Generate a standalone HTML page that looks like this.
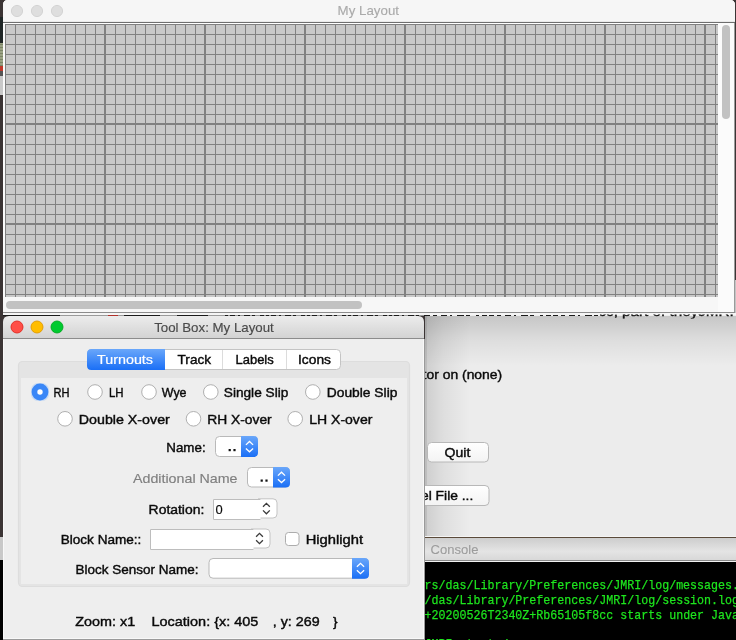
<!DOCTYPE html><html><head><meta charset="utf-8"><style>html,body{margin:0;padding:0;background:#3b3434;overflow:hidden;width:736px;height:640px}svg{display:block;will-change:transform}</style></head><body><svg width="736" height="640" viewBox="0 0 736 640" shape-rendering="auto">
<defs>
<linearGradient id="tbx" x1="0" y1="0" x2="0" y2="1"><stop offset="0" stop-color="#ececec"/><stop offset="1" stop-color="#d3d3d3"/></linearGradient>
<linearGradient id="blue" x1="0" y1="0" x2="0" y2="1"><stop offset="0" stop-color="#6aa7fa"/><stop offset="1" stop-color="#1a6ff6"/></linearGradient>
<linearGradient id="con" x1="0" y1="0" x2="0" y2="1"><stop offset="0" stop-color="#cdcdcd"/><stop offset="0.6" stop-color="#e4e4e4"/><stop offset="1" stop-color="#d8d8d8"/></linearGradient>
<linearGradient id="shTop" x1="0" y1="0" x2="0" y2="1"><stop offset="0" stop-color="#000" stop-opacity="0.16"/><stop offset="0.5" stop-color="#000" stop-opacity="0.06"/><stop offset="1" stop-color="#000" stop-opacity="0"/></linearGradient>
<linearGradient id="shLeft" x1="0" y1="0" x2="1" y2="0"><stop offset="0" stop-color="#000" stop-opacity="0.13"/><stop offset="0.4" stop-color="#000" stop-opacity="0.06"/><stop offset="1" stop-color="#000" stop-opacity="0"/></linearGradient>
<linearGradient id="btn" x1="0" y1="0" x2="0" y2="1"><stop offset="0" stop-color="#ffffff"/><stop offset="1" stop-color="#f3f3f3"/></linearGradient>
<clipPath id="clipMain"><rect x="425" y="313" width="311" height="224"/></clipPath>
<clipPath id="clipCon"><rect x="425" y="562" width="311" height="78"/></clipPath>
<clipPath id="clipStrip"><rect x="0" y="313" width="736" height="3"/></clipPath>
</defs>
<rect x="0" y="0" width="736" height="640" fill="#3b3434" />
<rect x="0" y="17" width="3" height="26" fill="#1f2626" />
<rect x="0" y="43" width="3" height="23" fill="#9aa283" />
<rect x="0" y="44" width="3" height="1" fill="#7b8466" />
<rect x="0" y="47" width="3" height="1" fill="#7b8466" />
<rect x="0" y="50" width="3" height="1" fill="#7b8466" />
<rect x="0" y="53" width="3" height="1" fill="#7b8466" />
<rect x="0" y="56" width="3" height="1" fill="#7b8466" />
<rect x="0" y="59" width="3" height="1" fill="#7b8466" />
<rect x="0" y="62" width="3" height="1" fill="#7b8466" />
<rect x="0" y="65" width="3" height="1" fill="#7b8466" />
<rect x="0" y="66" width="3" height="5" fill="#c0392b" />
<rect x="0" y="71" width="3" height="5" fill="#555555" />
<rect x="0" y="76" width="3" height="19" fill="#c8c8c8" />
<rect x="0" y="537" width="3" height="23" fill="#c8c8c8" />
<rect x="0" y="560" width="3" height="80" fill="#000000" />
<rect x="425" y="313" width="311" height="224" fill="#ececec" />
<g clip-path="url(#clipMain)">
<rect x="425" y="316" width="311" height="50" fill="url(#shTop)" />
<rect x="425" y="316" width="45" height="221" fill="url(#shLeft)" />
<rect x="425" y="316" width="2" height="221" fill="#000" opacity="0.08"/>
</g>
<rect x="3" y="313" width="733" height="2" fill="#f5f5f5" />
<rect x="3" y="315" width="422" height="1" fill="#9a9a9a" />
<rect x="3" y="315" width="57" height="1" fill="#1a1a1a" />
<rect x="108" y="315" width="10" height="1" fill="#b0302a" />
<rect x="124" y="315" width="36" height="1" fill="#1a1a1a" />
<rect x="177" y="315" width="31" height="1" fill="#1a1a1a" />
<line x1="225" y1="315.5" x2="425" y2="315.5" stroke="#1a1a1a" stroke-width="1" stroke-dasharray="3 2 5 3 2 4 6 2 3 5 4 2"/>
<line x1="425" y1="315.5" x2="600" y2="315.5" stroke="#1a1a1a" stroke-width="1" stroke-dasharray="5 3 4 4 6 3 2 5 7 2 4 6 3 3 5 2"/>
<clipPath id="clipStrip2"><rect x="600" y="314.6" width="136" height="4"/></clipPath>
<g clip-path="url(#clipStrip2)">
<text x="535" y="316.2" font-size="13" fill="#111" font-family='"Liberation Sans", sans-serif' textLength="248.6" lengthAdjust="spacingAndGlyphs" stroke="#111" stroke-width="0.4" >b65105f8cc, part of theyJMRI project</text>
</g>
<rect x="425" y="537" width="311" height="1" fill="#5a4a3a" />
<rect x="425" y="536" width="311" height="1" fill="#f4f4f4" />
<rect x="425" y="538" width="311" height="22" fill="url(#con)" />
<rect x="425" y="560" width="311" height="1" fill="#8a8a8a" />
<rect x="425" y="561" width="311" height="1" fill="#f0f0f0" />
<rect x="425" y="562" width="311" height="78" fill="#000000" />
<text x="430.6" y="553.9" font-size="13" fill="#9c9c9c" font-family='"Liberation Sans", sans-serif' textLength="47.8" lengthAdjust="spacingAndGlyphs" stroke="#9c9c9c" stroke-width="0.1" >Console</text>
<g clip-path="url(#clipMain)">
<text x="422.6" y="379" font-size="13" fill="#0a0a0a" font-family='"Liberation Sans", sans-serif' textLength="79.6" lengthAdjust="spacingAndGlyphs" stroke="#0a0a0a" stroke-width="0.4" >tor on (none)</text>
</g>
<path d="M3,313 L3,5 Q3,0 8,0 L730,0 Q735,0 735,5 L735,313 Z" fill="#fafafa"/>
<path d="M3,22 L3,5 Q3,0 8,0 L730,0 Q735,0 735,5 L735,22 Z" fill="#f6f6f6"/>
<rect x="3" y="21" width="732" height="1" fill="#e9e9e9" />
<rect x="3" y="22" width="732" height="1" fill="#6e6e6e" />
<rect x="3" y="23" width="732" height="1" fill="#ffffff" />
<rect x="734" y="23" width="1" height="290" fill="#9a9a9a" />
<rect x="735" y="280" width="1" height="33" fill="#c4c4c4" />
<rect x="3" y="312" width="732" height="1" fill="#8c8c8c" />
<circle cx="17" cy="11" r="5.6" fill="#dedede" stroke="#cdcdcd" stroke-width="0.8"/>
<circle cx="37" cy="11" r="5.6" fill="#dedede" stroke="#cdcdcd" stroke-width="0.8"/>
<circle cx="57" cy="11" r="5.6" fill="#dedede" stroke="#cdcdcd" stroke-width="0.8"/>
<text x="337.6" y="15.2" font-size="13" fill="#aaaaaa" font-family='"Liberation Sans", sans-serif' textLength="61.4" lengthAdjust="spacingAndGlyphs" stroke="#aaaaaa" stroke-width="0.12" >My Layout</text>
<rect x="5" y="24" width="713" height="273" fill="#c8c8c8" />
<path d="M5,24h1v273h-1zM15,24h1v273h-1zM25,24h1v273h-1zM35,24h1v273h-1zM45,24h1v273h-1zM55,24h1v273h-1zM65,24h1v273h-1zM75,24h1v273h-1zM85,24h1v273h-1zM95,24h1v273h-1zM105,24h1v273h-1zM115,24h1v273h-1zM125,24h1v273h-1zM135,24h1v273h-1zM145,24h1v273h-1zM155,24h1v273h-1zM165,24h1v273h-1zM175,24h1v273h-1zM185,24h1v273h-1zM195,24h1v273h-1zM205,24h1v273h-1zM215,24h1v273h-1zM225,24h1v273h-1zM235,24h1v273h-1zM245,24h1v273h-1zM255,24h1v273h-1zM265,24h1v273h-1zM275,24h1v273h-1zM285,24h1v273h-1zM295,24h1v273h-1zM305,24h1v273h-1zM315,24h1v273h-1zM325,24h1v273h-1zM335,24h1v273h-1zM345,24h1v273h-1zM355,24h1v273h-1zM365,24h1v273h-1zM375,24h1v273h-1zM385,24h1v273h-1zM395,24h1v273h-1zM405,24h1v273h-1zM415,24h1v273h-1zM425,24h1v273h-1zM435,24h1v273h-1zM445,24h1v273h-1zM455,24h1v273h-1zM465,24h1v273h-1zM475,24h1v273h-1zM485,24h1v273h-1zM495,24h1v273h-1zM505,24h1v273h-1zM515,24h1v273h-1zM525,24h1v273h-1zM535,24h1v273h-1zM545,24h1v273h-1zM555,24h1v273h-1zM565,24h1v273h-1zM575,24h1v273h-1zM585,24h1v273h-1zM595,24h1v273h-1zM605,24h1v273h-1zM615,24h1v273h-1zM625,24h1v273h-1zM635,24h1v273h-1zM645,24h1v273h-1zM655,24h1v273h-1zM665,24h1v273h-1zM675,24h1v273h-1zM685,24h1v273h-1zM695,24h1v273h-1zM705,24h1v273h-1zM715,24h1v273h-1zM104,24h1v273h-1zM204,24h1v273h-1zM304,24h1v273h-1zM404,24h1v273h-1zM504,24h1v273h-1zM604,24h1v273h-1zM704,24h1v273h-1zM5,24h713v1h-713zM5,34h713v1h-713zM5,44h713v1h-713zM5,54h713v1h-713zM5,64h713v1h-713zM5,74h713v1h-713zM5,84h713v1h-713zM5,94h713v1h-713zM5,104h713v1h-713zM5,114h713v1h-713zM5,124h713v1h-713zM5,134h713v1h-713zM5,144h713v1h-713zM5,154h713v1h-713zM5,164h713v1h-713zM5,174h713v1h-713zM5,184h713v1h-713zM5,194h713v1h-713zM5,204h713v1h-713zM5,214h713v1h-713zM5,224h713v1h-713zM5,234h713v1h-713zM5,244h713v1h-713zM5,254h713v1h-713zM5,264h713v1h-713zM5,274h713v1h-713zM5,284h713v1h-713zM5,294h713v1h-713zM5,123h713v1h-713zM5,223h713v1h-713z" fill="#808080" shape-rendering="crispEdges"/>
<rect x="718" y="23" width="16" height="289" fill="#fbfbfb" />
<rect x="3" y="297" width="715" height="15" fill="#f7f7f7" />
<rect x="722" y="25" width="8" height="94" rx="4" fill="#c2c2c2"/>
<rect x="6" y="301" width="356" height="8" rx="4" fill="#c2c2c2"/>
<rect x="3" y="339" width="422" height="301" fill="#9a9a9a" />
<rect x="3" y="339" width="421" height="300" fill="#f8f8f8" />
<rect x="4" y="339" width="419" height="299" fill="#eeeeee" />
<path d="M3,338 L3,322 Q3,316 9,316 L418,316 Q424,316 424,322 L424,338 Z" fill="url(#tbx)"/>
<rect x="3" y="338" width="421" height="1" fill="#8c8c8c" />
<circle cx="17" cy="327" r="6" fill="#ff4f47" stroke="#e0281f" stroke-width="0.9"/>
<circle cx="37" cy="327" r="6" fill="#ffbd00" stroke="#e09800" stroke-width="0.9"/>
<circle cx="57" cy="327" r="6" fill="#00ca30" stroke="#00a81e" stroke-width="0.9"/>
<text x="154.2" y="331.9" font-size="13" fill="#4a4a4a" font-family='"Liberation Sans", sans-serif' textLength="119.6" lengthAdjust="spacingAndGlyphs" stroke="#4a4a4a" stroke-width="0.15" >Tool Box: My Layout</text>
<rect x="18.5" y="361.5" width="391" height="225" rx="4" fill="#e4e4e4" stroke="#dddddd" stroke-width="1.2"/>
<rect x="21" y="378" width="386" height="206" fill="#eeeeee" />
<rect x="87.5" y="349.5" width="253" height="20" rx="4" fill="#ffffff" stroke="#c4c4c4" stroke-width="1"/>
<path d="M91.5,349 L165,349 L165,370 L91.5,370 Q87,370 87,365.5 L87,353.5 Q87,349 91.5,349 Z" fill="url(#blue)"/>
<rect x="222" y="350" width="1" height="19" fill="#dcdcdc" />
<rect x="286" y="350" width="1" height="19" fill="#dcdcdc" />
<text x="97" y="364.3" font-size="13" fill="#ffffff" font-family='"Liberation Sans", sans-serif' textLength="56" lengthAdjust="spacingAndGlyphs" stroke="#ffffff" stroke-width="0.2" >Turnouts</text>
<text x="177.6" y="364.3" font-size="13" fill="#0a0a0a" font-family='"Liberation Sans", sans-serif' textLength="33.4" lengthAdjust="spacingAndGlyphs" stroke="#0a0a0a" stroke-width="0.4" >Track</text>
<text x="235.5" y="364.3" font-size="13" fill="#0a0a0a" font-family='"Liberation Sans", sans-serif' textLength="38.2" lengthAdjust="spacingAndGlyphs" stroke="#0a0a0a" stroke-width="0.4" >Labels</text>
<text x="298" y="364.3" font-size="13" fill="#0a0a0a" font-family='"Liberation Sans", sans-serif' textLength="33" lengthAdjust="spacingAndGlyphs" stroke="#0a0a0a" stroke-width="0.4" >Icons</text>
<rect x="31" y="383" width="18" height="18" rx="7" fill="#9cc3f8" opacity="0.45"/>
<circle cx="40" cy="392" r="8.4" fill="#3a87f7"/>
<circle cx="40" cy="392" r="2.7" fill="#ffffff"/>
<text x="53.5" y="396.6" font-size="13" fill="#0a0a0a" font-family='"Liberation Sans", sans-serif' textLength="16" lengthAdjust="spacingAndGlyphs" stroke="#0a0a0a" stroke-width="0.4" >RH</text>
<circle cx="95" cy="392" r="7.3" fill="#ffffff" stroke="#b0b0b0" stroke-width="1"/>
<text x="108.9" y="396.6" font-size="13" fill="#0a0a0a" font-family='"Liberation Sans", sans-serif' textLength="14.6" lengthAdjust="spacingAndGlyphs" stroke="#0a0a0a" stroke-width="0.4" >LH</text>
<circle cx="149" cy="392" r="7.3" fill="#ffffff" stroke="#b0b0b0" stroke-width="1"/>
<text x="161.8" y="396.6" font-size="13" fill="#0a0a0a" font-family='"Liberation Sans", sans-serif' textLength="24.7" lengthAdjust="spacingAndGlyphs" stroke="#0a0a0a" stroke-width="0.4" >Wye</text>
<circle cx="210.8" cy="392" r="7.3" fill="#ffffff" stroke="#b0b0b0" stroke-width="1"/>
<text x="223.8" y="396.6" font-size="13" fill="#0a0a0a" font-family='"Liberation Sans", sans-serif' textLength="64.5" lengthAdjust="spacingAndGlyphs" stroke="#0a0a0a" stroke-width="0.4" >Single Slip</text>
<circle cx="312.8" cy="392" r="7.3" fill="#ffffff" stroke="#b0b0b0" stroke-width="1"/>
<text x="326.8" y="396.6" font-size="13" fill="#0a0a0a" font-family='"Liberation Sans", sans-serif' textLength="70.6" lengthAdjust="spacingAndGlyphs" stroke="#0a0a0a" stroke-width="0.4" >Double Slip</text>
<circle cx="65" cy="418.8" r="7.3" fill="#ffffff" stroke="#b0b0b0" stroke-width="1"/>
<text x="78.8" y="423.5" font-size="13" fill="#0a0a0a" font-family='"Liberation Sans", sans-serif' textLength="91" lengthAdjust="spacingAndGlyphs" stroke="#0a0a0a" stroke-width="0.4" >Double X-over</text>
<circle cx="193.5" cy="418.8" r="7.3" fill="#ffffff" stroke="#b0b0b0" stroke-width="1"/>
<text x="207.2" y="423.5" font-size="13" fill="#0a0a0a" font-family='"Liberation Sans", sans-serif' textLength="64.5" lengthAdjust="spacingAndGlyphs" stroke="#0a0a0a" stroke-width="0.4" >RH X-over</text>
<circle cx="295.2" cy="418.8" r="7.3" fill="#ffffff" stroke="#b0b0b0" stroke-width="1"/>
<text x="309.2" y="423.5" font-size="13" fill="#0a0a0a" font-family='"Liberation Sans", sans-serif' textLength="63.2" lengthAdjust="spacingAndGlyphs" stroke="#0a0a0a" stroke-width="0.4" >LH X-over</text>
<text x="166.3" y="451.9" font-size="13" fill="#0a0a0a" font-family='"Liberation Sans", sans-serif' textLength="39.3" lengthAdjust="spacingAndGlyphs" stroke="#0a0a0a" stroke-width="0.4" >Name:</text>
<rect x="215.5" y="436.5" width="42" height="20" rx="4" fill="#ffffff" stroke="#b9b9b9" stroke-width="1"/>
<path d="M241,436 L253.5,436 Q258,436 258,440.5 L258,452.5 Q258,457 253.5,457 L241,457 Z" fill="url(#blue)"/>
<path d="M245.9,444.9 L249.5,441.5 L253.1,444.9 M245.9,448.5 L249.5,451.8 L253.1,448.5" fill="none" stroke="#ffffff" stroke-width="1.3"/>
<rect x="228.6" y="449" width="2.2" height="2.2" fill="#111"/><rect x="233.4" y="449" width="2.2" height="2.2" fill="#111"/>
<text x="133" y="482.8" font-size="13" fill="#7f7f7f" font-family='"Liberation Sans", sans-serif' textLength="104.5" lengthAdjust="spacingAndGlyphs" stroke="#7f7f7f" stroke-width="0.15" >Additional Name</text>
<rect x="247.5" y="467.5" width="42" height="19.5" rx="4" fill="#ffffff" stroke="#b9b9b9" stroke-width="1"/>
<path d="M273,467 L285.5,467 Q290,467 290,471.5 L290,483.0 Q290,487.5 285.5,487.5 L273,487.5 Z" fill="url(#blue)"/>
<path d="M277.9,475.65 L281.5,472.25 L285.1,475.65 M277.9,479.25 L281.5,482.55 L285.1,479.25" fill="none" stroke="#ffffff" stroke-width="1.3"/>
<rect x="260.6" y="479.5" width="2.2" height="2.2" fill="#111"/><rect x="265.4" y="479.5" width="2.2" height="2.2" fill="#111"/>
<text x="148.6" y="513.8" font-size="13" fill="#0a0a0a" font-family='"Liberation Sans", sans-serif' textLength="55.7" lengthAdjust="spacingAndGlyphs" stroke="#0a0a0a" stroke-width="0.4" >Rotation:</text>
<path d="M258,498.8 L273.0,498.8 Q277.0,498.8 277.0,502.8 L277.0,514.0 Q277.0,518.0 273.0,518.0 L258,518.0" fill="#ffffff" stroke="#c4c4c4" stroke-width="1"/>
<path d="M263.0,506.8 L266.4,503.40000000000003 L269.79999999999995,506.8 M263.0,510.40000000000003 L266.4,513.8000000000001 L269.79999999999995,510.40000000000003" fill="none" stroke="#3a3a3a" stroke-width="1.3"/>
<rect x="213" y="499" width="47.5" height="21" fill="#ffffff"/>
<path d="M260.5,499.5 L213.5,499.5 L213.5,519.5 L260.5,519.5" fill="none" stroke="#bdbdbd" stroke-width="1"/>
<text x="215.5" y="513.6" font-size="13" fill="#0a0a0a" font-family='"Liberation Sans", sans-serif' textLength="7.2" lengthAdjust="spacingAndGlyphs" stroke="#0a0a0a" stroke-width="0.15" >0</text>
<text x="60.7" y="544.1" font-size="13" fill="#0a0a0a" font-family='"Liberation Sans", sans-serif' textLength="80.7" lengthAdjust="spacingAndGlyphs" stroke="#0a0a0a" stroke-width="0.4" >Block Name::</text>
<path d="M251,529.0 L266.0,529.0 Q270.0,529.0 270.0,533.0 L270.0,544.0 Q270.0,548.0 266.0,548.0 L251,548.0" fill="#ffffff" stroke="#c4c4c4" stroke-width="1"/>
<path d="M256.1,536.7 L259.5,533.3 L262.9,536.7 M256.1,540.3 L259.5,543.7 L262.9,540.3" fill="none" stroke="#3a3a3a" stroke-width="1.3"/>
<rect x="150" y="529" width="103.5" height="21" fill="#ffffff"/>
<path d="M253.5,529.5 L150.5,529.5 L150.5,549.5 L253.5,549.5" fill="none" stroke="#bdbdbd" stroke-width="1"/>
<rect x="285.5" y="532.5" width="13.5" height="13" rx="3" fill="#ffffff" stroke="#adadad" stroke-width="1"/>
<text x="305.7" y="544" font-size="13" fill="#0a0a0a" font-family='"Liberation Sans", sans-serif' textLength="57.3" lengthAdjust="spacingAndGlyphs" stroke="#0a0a0a" stroke-width="0.4" >Highlight</text>
<text x="75.6" y="574" font-size="13" fill="#0a0a0a" font-family='"Liberation Sans", sans-serif' textLength="123" lengthAdjust="spacingAndGlyphs" stroke="#0a0a0a" stroke-width="0.4" >Block Sensor Name:</text>
<rect x="209.0" y="558.5" width="159.5" height="19.700000000000045" rx="4" fill="#ffffff" stroke="#b9b9b9" stroke-width="1"/>
<path d="M352,558 L364.5,558 Q369,558 369,562.5 L369,574.2 Q369,578.7 364.5,578.7 L352,578.7 Z" fill="url(#blue)"/>
<path d="M356.9,566.75 L360.5,563.35 L364.1,566.75 M356.9,570.35 L360.5,573.65 L364.1,570.35" fill="none" stroke="#ffffff" stroke-width="1.3"/>
<text x="75.3" y="626" font-size="13" fill="#0a0a0a" font-family='"Liberation Sans", sans-serif' textLength="59.9" lengthAdjust="spacingAndGlyphs" stroke="#0a0a0a" stroke-width="0.4" >Zoom: x1</text>
<text x="151.5" y="626" font-size="13" fill="#0a0a0a" font-family='"Liberation Sans", sans-serif' textLength="106.9" lengthAdjust="spacingAndGlyphs" stroke="#0a0a0a" stroke-width="0.4" >Location: {x: 405</text>
<text x="272.8" y="626" font-size="13" fill="#0a0a0a" font-family='"Liberation Sans", sans-serif' textLength="46.8" lengthAdjust="spacingAndGlyphs" stroke="#0a0a0a" stroke-width="0.4" >, y: 269</text>
<text x="333" y="626" font-size="13" fill="#0a0a0a" font-family='"Liberation Sans", sans-serif' textLength="4.6" lengthAdjust="spacingAndGlyphs" stroke="#0a0a0a" stroke-width="0.4" >}</text>
<g clip-path="url(#clipMain)">
<rect x="427.5" y="442.5" width="61" height="19.5" rx="4" fill="url(#btn)" stroke="#b8b8b8" stroke-width="1"/>
<text x="444.6" y="456.7" font-size="13" fill="#0a0a0a" font-family='"Liberation Sans", sans-serif' textLength="25.8" lengthAdjust="spacingAndGlyphs" stroke="#0a0a0a" stroke-width="0.4" >Quit</text>
<rect x="380.5" y="485.5" width="108.5" height="20" rx="4" fill="url(#btn)" stroke="#b8b8b8" stroke-width="1"/>
<text x="421" y="499.6" font-size="13" fill="#0a0a0a" font-family='"Liberation Sans", sans-serif' textLength="52.3" lengthAdjust="spacingAndGlyphs" stroke="#0a0a0a" stroke-width="0.4" >el File ...</text>
</g>
<g clip-path="url(#clipCon)">
<text x="424.5" y="588.6" font-size="13.2" fill="#1ee61e" font-family='"Liberation Mono", monospace' textLength="335.52" lengthAdjust="spacingAndGlyphs" stroke="#1ee61e" stroke-width="0.25" >rs/das/Library/Preferences/JMRI/log/messages.log</text>
<text x="424.5" y="603.5" font-size="13.2" fill="#1ee61e" font-family='"Liberation Mono", monospace' textLength="314.55" lengthAdjust="spacingAndGlyphs" stroke="#1ee61e" stroke-width="0.25" >/das/Library/Preferences/JMRI/log/session.log</text>
<text x="424.5" y="618.9" font-size="13.2" fill="#1ee61e" font-family='"Liberation Mono", monospace' textLength="342.51" lengthAdjust="spacingAndGlyphs" stroke="#1ee61e" stroke-width="0.25" >+20200526T2340Z+Rb65105f8cc starts under Java 1.8</text>
<text x="424.5" y="648" font-size="13.2" fill="#1ee61e" font-family='"Liberation Mono", monospace' textLength="83.88" lengthAdjust="spacingAndGlyphs" stroke="#1ee61e" stroke-width="0.25" >JMRI started</text>
</g>
</svg></body></html>
